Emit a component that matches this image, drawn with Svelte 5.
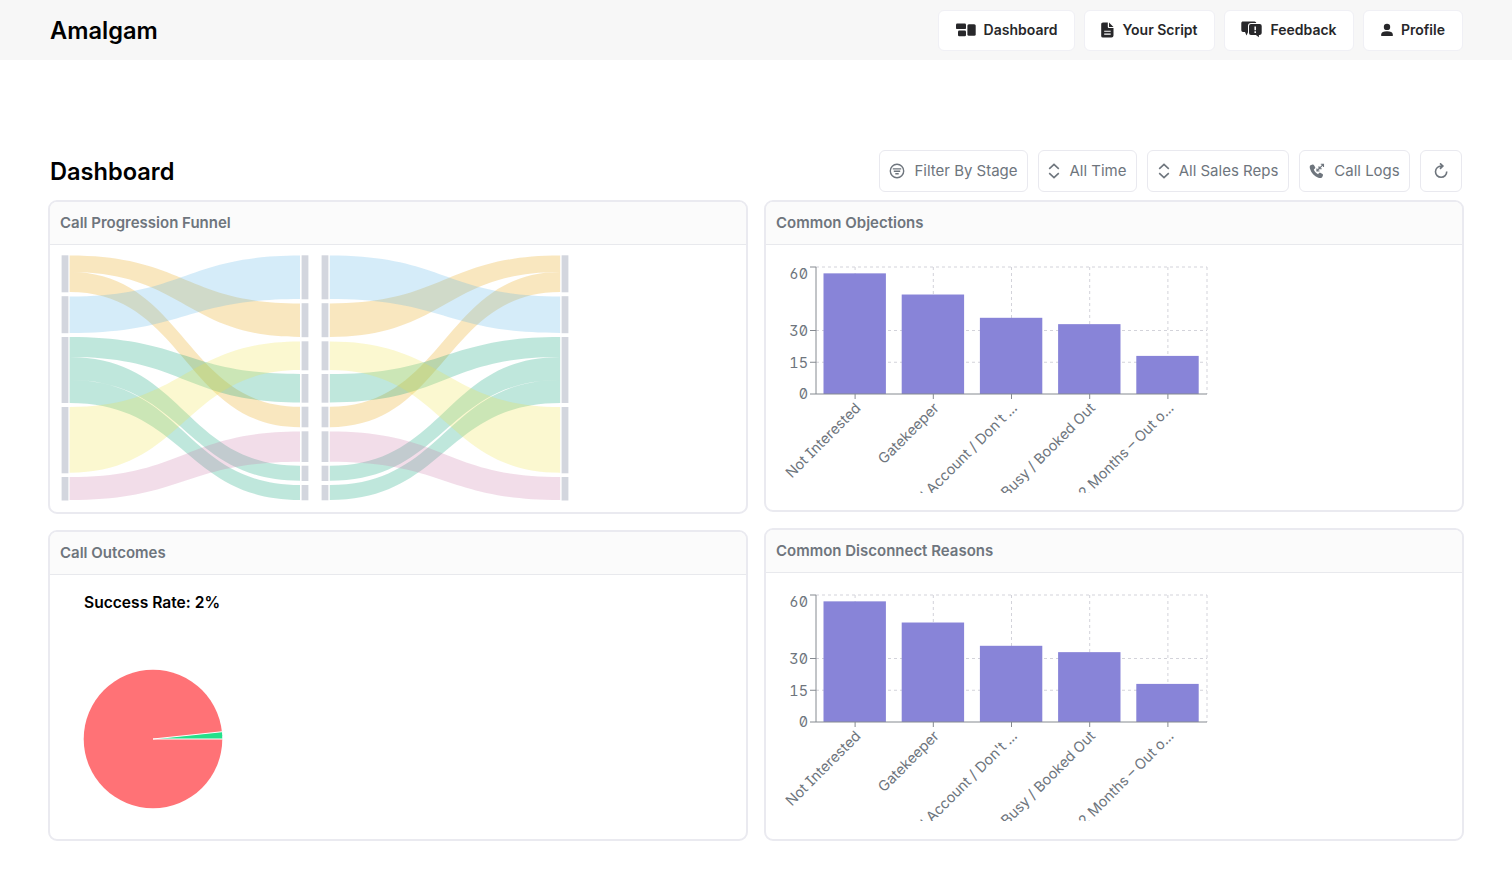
<script lang="ts">
	type Link = { color: string; from: [number, number]; to: [number, number] };

	const navItems = [
		{ label: 'Dashboard', icon: 'board', width: 137 },
		{ label: 'Your Script', icon: 'file', width: 131 },
		{ label: 'Feedback', icon: 'feedback', width: 130 },
		{ label: 'Profile', icon: 'person', width: 100 }
	];

	const filters = [
		{ label: 'Filter By Stage', icon: 'filter', width: 149 },
		{ label: 'All Time', icon: 'updown', width: 99 },
		{ label: 'All Sales Reps', icon: 'updown', width: 142 },
		{ label: 'Call Logs', icon: 'phone', width: 111 },
		{ label: '', icon: 'refresh', width: 42 }
	];

	const stageNodes = [[0.3, 37], [41.2, 37], [82, 66], [152, 66.3], [222, 23.5]];
	const outcomeNodes = [[0.3, 44], [48.2, 34], [86.3, 29], [119, 28.7], [151.7, 20.6], [176.3, 30.7], [210.7, 15.3], [230, 15.3]];

	const links: Link[] = [
		{ color: '#e69f00', from: [0.6, 17], to: [48.5, 82] },
		{ color: '#e69f00', from: [17, 37], to: [151.8, 172.2] },
		{ color: '#56b4e9', from: [41.5, 78], to: [0.6, 44] },
		{ color: '#009e73', from: [82, 102], to: [119, 147.5] },
		{ color: '#009e73', from: [102, 125], to: [210.8, 225.8] },
		{ color: '#009e73', from: [125, 148], to: [230, 245] },
		{ color: '#f0e442', from: [152, 217.7], to: [86.5, 115] },
		{ color: '#cc79a7', from: [222, 245], to: [176.5, 206.7] }
	];

	const reasons = [
		{ name: 'Not Interested', value: 57 },
		{ name: 'Gatekeeper', value: 47 },
		{ name: "Old Account / Don't ...", value: 36 },
		{ name: 'Busy / Booked Out', value: 33 },
		{ name: '12 Months – Out o...', value: 18 }
	];

	const plot = { left: 40, top: 12, width: 391, height: 127 };
	const band = plot.width / reasons.length;
	const bottom = plot.top + plot.height;
	const scaleY = (v: number) => bottom - (v / 60) * plot.height;

	function ribbon(a: [number, number], b: [number, number]) {
		const x0 = 8.6;
		const x1 = 239;
		const m = (x0 + x1) / 2;
		return `M${x0},${a[0]}C${m},${a[0]} ${m},${b[0]} ${x1},${b[0]}V${b[1]}C${m},${b[1]} ${m},${a[1]} ${x0},${a[1]}Z`;
	}
</script>

{#snippet icon(name: string)}
	{#if name === 'board'}
		<svg class="icon" width="20" height="14" viewBox="0 0 20 14" fill="currentColor">
			<rect x="0" y="0.5" width="10" height="5.6" rx="1.2" />
			<rect x="2" y="7.5" width="8" height="5.8" rx="1.2" />
			<rect x="11.4" y="1.3" width="8.3" height="11.4" rx="1.5" />
		</svg>
	{:else if name === 'file'}
		<svg class="icon" width="13" height="16" viewBox="0 0 13 16">
			<path fill="currentColor" d="M2 .5h4.8v4.2c0 .9.5 1.4 1.4 1.4h4.3v7.5a2 2 0 0 1-2 2H2a1.8 1.8 0 0 1-1.8-2V2.3C.2 1.2 1 .5 2 .5zM8 .5l4.5 4.5H8.5A.5.5 0 0 1 8 4.5z" />
			<path stroke="#fff" stroke-width="1.1" d="M3.2 9.2h6.5M3.2 12.1h6.5" />
		</svg>
	{:else if name === 'feedback'}
		<svg class="icon" width="21" height="17" viewBox="0 0 21 17">
			<path fill="currentColor" d="M2 .5h11.5A1.8 1.8 0 0 1 15.3 2H10a3 3 0 0 0-3 3v6.3L5.5 14.5 4 11H2A1.7 1.7 0 0 1 .3 9.3V2.2C.3 1.2 1 .5 2 .5z" />
			<path fill="currentColor" d="M10 3.1h8.7a2 2 0 0 1 2 2v7a1.8 1.8 0 0 1-1.8 1.8h-1v2.3l-3-2.3H10a2 2 0 0 1-2-2V5.100a2 2 0 0 1 2-2z" />
			<path stroke="#fff" stroke-width="1.5" d="M14.2 5.6v3.6M14.2 10.3v1.6" />
		</svg>
	{:else if name === 'person'}
		<svg class="icon" width="12" height="14" viewBox="0 0 12 14" fill="currentColor">
			<circle cx="6" cy="3.9" r="3.2" />
			<path d="M.2 13v-1.5C.2 9.4 2.6 8.3 6 8.3s5.8 1.1 5.8 3.2V13z" />
		</svg>
	{:else if name === 'filter'}
		<svg class="icon" width="16" height="16" viewBox="0 0 16 16" fill="none" stroke="currentColor" stroke-width="1.4">
			<circle cx="8" cy="8" r="6.7" />
			<path d="M3.8 5.9h8.4M4.8 8.3h6.4M6.3 10.8h3.4" />
		</svg>
	{:else if name === 'updown'}
		<svg class="icon" width="12" height="16" viewBox="0 0 12 16" fill="none" stroke="currentColor" stroke-width="1.6">
			<path d="M1.2 5.800 6 1.400 10.800 5.800M1.200 10.200 6 14.600 10.800 10.200" />
		</svg>
	{:else if name === 'phone'}
		<svg class="icon" width="16" height="16" viewBox="0 0 16 16">
			<path fill="currentColor" d="M3.6 1.6 1.5 2.3C.6 2.7.6 4.3 1 5.8c1.2 4.3 4.2 7.6 8.3 8.9 1.8.6 3.5.4 4-.6l.7-1.9c.1-.5-.1-.9-.5-1.2l-2.2-1.2c-.5-.3-1-.1-1.3.3l-.9 1.2C7 10.2 5.5 8.5 4.8 6.5l1.1-1c.4-.4.5-.8.3-1.3L5 2.2c-.3-.5-.8-.8-1.4-.6z" />
			<path fill="none" stroke="currentColor" stroke-width="1.1" d="M7.8 8 14.6 1.2M7.900 5.400V8h2.600M14.500 4V1.300h-2.700M10 3.200v2.600h2.700" />
		</svg>
	{:else}
		<svg class="icon" width="14" height="16" viewBox="0 0 14 16" fill="none" stroke="currentColor" stroke-width="1.6">
			<path d="M7.5 3.1A5.6 5.6 0 1 0 12.7 8.5M7 3.1h1.5M6 .3l2.9 2.8L6 5.9" />
		</svg>
	{/if}
{/snippet}

{#snippet nodes(list: number[][], x: number)}
	{#each list as [y, h]}
		<rect class="node" {x} {y} width="6.8" height={h} />
	{/each}
{/snippet}

{#snippet barChart()}
	<svg class="bar-chart" width="450" height="238" viewBox="0 0 450 238">
		<g class="grid">
			{#each [15, 30, 60] as v}
				<path d="M{plot.left},{scaleY(v)}h{plot.width}" />
			{/each}
			{#each reasons as _, i}
				<path d="M{plot.left + band * (i + 0.5)},{plot.top}v{plot.height}" />
			{/each}
			<path d="M{plot.left + plot.width},{plot.top}v{plot.height}" />
		</g>
		{#each reasons as r, i}
			<rect class="bar" x={plot.left + band * i + 7.5} y={scaleY(r.value)} width="62.4" height={bottom - scaleY(r.value)} />
		{/each}
		<path class="axis" d="M{plot.left},{plot.top}V{bottom}H{plot.left + plot.width}" />
		{#each [0, 15, 30, 60] as v}
			<path class="axis" d="M{plot.left - 6},{scaleY(v)}h6" />
			<text class="tick" x={plot.left - 8} y={scaleY(v) + (v === 60 ? 11.5 : 5.3)}>{v}</text>
		{/each}
		{#each reasons as r, i}
			{@const cx = plot.left + band * (i + 0.5)}
			<path class="axis" d="M{cx},{bottom}v5" />
			<text class="tick" transform="translate({cx + 6.5}, {bottom + 15}) rotate(-45)">{r.name}</text>
		{/each}
	</svg>
{/snippet}

<header class="topbar">
	<div class="brand">Amalgam</div>
	<nav>
		{#each navItems as item}
			<button class="nav-btn" style:width="{item.width}px">{@render icon(item.icon)}{item.label}</button>
		{/each}
	</nav>
</header>

<main>
	<div class="title-row">
		<h1>Dashboard</h1>
		<div class="filters">
			{#each filters as f}
				<button class="filter-btn" style:width="{f.width}px">{@render icon(f.icon)}{f.label}</button>
			{/each}
		</div>
	</div>

	<div class="columns">
		<div class="column">
			<section class="card funnel">
				<h2>Call Progression Funnel</h2>
				<div class="sankeys">
					<svg width="260" height="248" viewBox="-1 0 260 248">
						{#each links as l}
							<path class="link" fill={l.color} d={ribbon(l.from, l.to)} />
						{/each}
						{@render nodes(stageNodes, 0.6)}
						{@render nodes(outcomeNodes, 240.6)}
					</svg>
					<svg width="250" height="248" viewBox="-1 0 250 248">
						<g transform="translate(247.8 0) scale(-1 1)">
							{#each links as l}
								<path class="link" fill={l.color} d={ribbon(l.from, l.to)} />
							{/each}
							{@render nodes(stageNodes, 0.4)}
							{@render nodes(outcomeNodes, 240.4)}
						</g>
					</svg>
				</div>
			</section>
			<section class="card outcomes">
				<h2>Call Outcomes</h2>
				<div class="rate">Success Rate: 2%</div>
				<svg class="pie" width="142" height="142" viewBox="-71 -71 142 142">
					<circle r="69.3" fill="#ff7276" />
					<path fill="#24e08a" stroke="#fff" d="M0,0L69.5,-7.3A69.8,69.8 0 0 1 69.8,0Z" />
				</svg>
			</section>
		</div>
		<div class="column">
			<section class="card objections">
				<h2>Common Objections</h2>
				{@render barChart()}
			</section>
			<section class="card disconnects">
				<h2>Common Disconnect Reasons</h2>
				{@render barChart()}
			</section>
		</div>
	</div>
</main>

<style>
	:global(body) {
		background: #fff;
		font-family: Inter, sans-serif;
	}

	h1, h2 {
		margin: 0;
	}

	.topbar {
		display: flex;
		align-items: center;
		justify-content: space-between;
		height: 60px;
		padding: 0 49.5px 0 50px;
		box-sizing: border-box;
		background: #f7f7f7;
	}

	.brand, h1 {
		padding-top: 2px;
		font-size: 23.6px;
		font-weight: 600;
		line-height: 30px;
		color: #000;
	}

	nav {
		display: flex;
		gap: 9px;
	}

	.filters {
		display: flex;
		gap: 10px;
	}

	button {
		display: flex;
		align-items: center;
		justify-content: center;
		box-sizing: border-box;
		border: 1px solid #e9e9ef;
		border-radius: 6px;
		background: #fff;
		font-family: inherit;
		white-space: nowrap;
	}

	.nav-btn {
		height: 41px;
		gap: 8px;
		padding: 0 0 1px 1px;
		border-color: #f0f0f5;
		font-size: 14px;
		font-weight: 600;
		line-height: 18px;
		color: #27272a;
	}

	.filter-btn {
		height: 42px;
		gap: 9px;
		padding: 0 0 1px;
		font-size: 15px;
		color: #6e757d;
	}

	.icon {
		flex: none;
	}

	main {
		padding: 90px 48px 0;
	}

	.title-row {
		display: flex;
		align-items: center;
		justify-content: space-between;
		height: 42px;
		padding: 0 2px;
		margin-bottom: 8px;
	}

	.columns {
		display: grid;
		grid-template-columns: 700px 700px;
		gap: 16px;
	}

	.column {
		display: flex;
		flex-direction: column;
		gap: 16px;
	}

	.card {
		box-sizing: border-box;
		border: 2px solid #eaeaf0;
		border-radius: 9px;
		overflow: hidden;
	}

	.card h2 {
		height: 42px;
		padding-left: 10px;
		border-bottom: 1px solid #e8e9ed;
		background: #fbfbfb;
		font-size: 15px;
		font-weight: 600;
		line-height: 42px;
		color: #6e757d;
	}

	.funnel {
		height: 314px;
	}

	.outcomes {
		height: 311px;
	}

	.objections {
		height: 312px;
	}

	.disconnects {
		height: 313px;
	}

	.sankeys {
		display: flex;
		padding: 10px 0 0 10px;
	}

	.link {
		fill-opacity: 0.25;
	}

	.node {
		fill: #d3d6de;
	}

	.rate {
		padding: 18px 0 0 34px;
		font-size: 15.6px;
		font-weight: 600;
		line-height: 20px;
		color: #000;
	}

	.pie {
		display: block;
		margin: 55px 0 0 32px;
	}

	.bar-chart {
		display: block;
		margin: 10px 0 0 10px;
		overflow: hidden;
	}

	.grid path {
		fill: none;
		stroke: #d3d3da;
		stroke-dasharray: 3 3;
	}

	.bar {
		fill: #8884d8;
	}

	.axis {
		fill: none;
		stroke: #858a90;
	}

	.tick {
		font-size: 14.4px;
		font-feature-settings: 'zero', 'cv08', 'tnum', 'cv03', 'cv09';
		text-anchor: end;
		fill: #6e757d;
	}
</style>
